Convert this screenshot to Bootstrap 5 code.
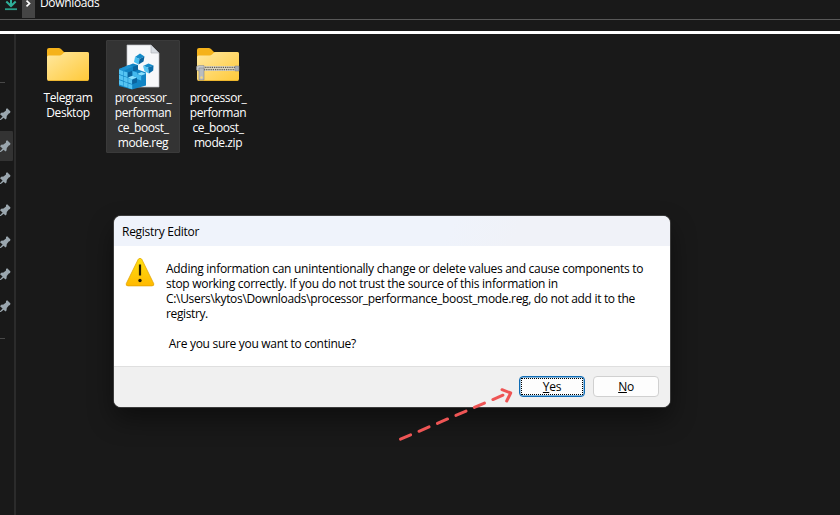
<!DOCTYPE html>
<html lang="en">
<head>
<meta charset="utf-8">
<meta name="viewport" content="width=device-width, initial-scale=1">
<title>Downloads</title>
<link href="https://cdn.jsdelivr.net/npm/bootstrap@5.3.0/dist/css/bootstrap.min.css" rel="stylesheet">
<style>
body{background:#191919;color:#fff;font:12px/15px "Open Sans","Noto Sans",sans-serif;height:515px}
.crumbs{height:20px;border-bottom:1px solid #585858;background:#191919}
.crumbs svg{flex:none}
.crumb-label{margin:-5px 0 0 5px;letter-spacing:-.34px}
.rule-white{height:3px;background:#fff;margin-top:11px}
.side{width:16px;border-right:2px solid #2b2b2b;padding-top:48px}
.side-line{height:1px;width:5px;background:#484848}
.pins{padding:15px 0 16px}
.pin{height:32px;width:13px;padding-top:1px}
.pin.active{background:linear-gradient(#333,#333) 0 1px/13px 30px no-repeat;border-radius:0 3px 3px 0}
.files{padding:6px 0 0 15px;gap:1px}
.tile{width:74px;height:113px;border:1px solid transparent;border-radius:1px;text-align:center;white-space:nowrap;letter-spacing:-.42px}
.tile.active{background:#333;border-color:#3a3a3a}
.tile svg{display:block;margin:-1px 0 0 -1px}
.dialog{position:absolute;left:114px;top:216px;width:556px;height:191px;border-radius:7px;background:#fff;color:#000;box-shadow:0 0 0 1px #3c3c3c,0 12px 26px rgba(0,0,0,.45)}
.dialog-title{height:30px;padding:0 8px;background:linear-gradient(115deg,#eff3fb 60%,#f0f2f8 72%);letter-spacing:-.27px}
.dialog-body{height:120px;padding:11px 12px 0 11px}
.msg{padding:4px 0 0 10px;white-space:pre}
.l1,.l2{letter-spacing:-.284px}
.l3{letter-spacing:-.32px}
.l4{letter-spacing:-.38px}
.l5{letter-spacing:-.3px}
.dialog-foot{height:41px;background:#f0f0f0;border-top:1px solid #dfdfdf;padding:9px 11px 0 0;gap:8px}
.key{width:66px;height:21px;padding:0;border:1px solid #d0d0d0;border-radius:4px;background:#fdfdfd;color:#000;font-size:12px;line-height:20px;letter-spacing:-.3px;position:relative}
.key.primary{border-color:#0f6cb5;box-shadow:inset 0 0 0 .4px #0f6cb5}
.key.primary::after{content:"";position:absolute;inset:1px;border:1px dotted #000}
.key u{text-underline-offset:1px;text-decoration-skip-ink:none}
.arrow{position:absolute;left:390px;top:380px}
</style>
</head>
<body class="overflow-hidden d-flex flex-column m-0">
<header class="crumbs d-flex flex-shrink-0">
  <svg width="22" height="19" viewBox="0 0 22 19"><path d="M11 -3V5.5M6.3 1.5L11 6L15.7 1.5" fill="none" stroke="#2fb09a" stroke-width="2"/><path d="M5 9.2H17" stroke="#2a9c88" stroke-width="1.8"/></svg>
  <svg width="13" height="19" viewBox="0 0 13 19"><path d="M0 -3H13V18H0Z" fill="#454545"/><path d="M4.5 .7L7.5 3.5L4.5 6.3" fill="none" stroke="#fff" stroke-width="1.7"/></svg>
  <div class="crumb-label">Downloads</div>
</header>
<div class="rule-white flex-shrink-0"></div>
<main class="d-flex flex-grow-1">
  <svg class="d-none"><symbol id="pin" viewBox="0 0 12 30"><path d="M0 20.2L2.6 17.6L0 15.2L1.2 13.8L3.5 13.4L6 11.4L6 10L7.2 9.2L10.5 12.6L10 14L8.8 14.6L6.8 17L6.5 19.4L5.4 20.4L3.7 18.8L.8 21L0 21Z" fill="#9aa6ae"/></symbol></svg>
  <aside class="side flex-shrink-0">
    <div class="side-line"></div>
    <div class="pins">
      <div class="pin"><svg class="d-block" width="12" height="30"><use href="#pin"/></svg></div>
      <div class="pin active"><svg class="d-block" width="12" height="30"><use href="#pin"/></svg></div>
      <div class="pin"><svg class="d-block" width="12" height="30"><use href="#pin"/></svg></div>
      <div class="pin"><svg class="d-block" width="12" height="30"><use href="#pin"/></svg></div>
      <div class="pin"><svg class="d-block" width="12" height="30"><use href="#pin"/></svg></div>
      <div class="pin"><svg class="d-block" width="12" height="30"><use href="#pin"/></svg></div>
      <div class="pin"><svg class="d-block" width="12" height="30"><use href="#pin"/></svg></div>
    </div>
    <div class="side-line"></div>
  </aside>
  <section class="files d-flex align-items-start">
    <div class="tile">
      <svg width="74" height="50" viewBox="0 0 74 50">
        <defs><linearGradient id="fold" x1="0" y1="0" x2="1" y2="1"><stop offset="0" stop-color="#ffe8a0"/><stop offset="1" stop-color="#ffc938"/></linearGradient></defs>
        <path id="tab" d="M16 10Q16 8 18 8H27.5Q29 8 30 9L33 12H56Q58 12 58 14V30H16Z" fill="#f5b21a"/>
        <path id="front" d="M16 17Q16 15.5 17.5 15.5H28.5Q30 15.5 31 14.5L32.5 13Q33.5 12 35 12H56Q58 12 58 14V39Q58 41 56 41H18Q16 41 16 39Z" fill="url(#fold)"/>
        <path d="M17 40.5H57" stroke="#e9b027" stroke-width=".8"/>
      </svg>
      Telegram<br>Desktop
    </div>
    <div class="tile active">
      <svg width="74" height="50" viewBox="0 0 74 50">
        <path d="M21 5H45L53 13V47H21Z" fill="#f7f8fa" stroke="#b9bcc0" stroke-width=".7"/>
        <path d="M45 5V13H53Z" fill="#d7dce2" stroke="#a9adb3" stroke-width=".6"/>
        <path d="M13 29L27 23.5L32 25V29.5L40 32.5V45.5L26 49.5L13 46Z" fill="#1184c4"/>
        <path d="M13 29L18 27L22.5 28.5L17.5 31ZM18 27L22.5 25L27 26.8L22.5 28.5Z" fill="#1f93d2"/>
        <path d="M13 29.6L17 31V35.5L13 34ZM17.5 31.2L21.7 32.5V37.2L17.5 35.7ZM13 34.8L17 36.2V40.6L13 39.3ZM17.5 36.4L21.7 37.8V42.4L17.5 41ZM22.2 38L26.2 39.5V44L22.2 42.6ZM13 40L17 41.4V45.8L13 44.6ZM17.5 41.8L21.7 43.1V47.6L17.5 46.3ZM22.2 43.4L26.2 44.8V49.2L22.2 48Z" fill="#55c4f3"/>
        <path d="M21.7 32.5L26.5 30.8V35.5L21.7 37.4ZM26.2 39.7L31 37.8V42.6L26.2 44.3ZM27 26.8L32 25V30L27 31.5Z" fill="#0a639e"/>
        <path d="M22 37.6L26.5 35.7L31 37.5L26 39.4ZM31 34L35.5 32L40 33.7L35.4 35.5Z" fill="#8be0fd"/>
        <path d="M26.5 31L31 32.6V37.4L26.5 35.7ZM31 34.3L35.2 35.8V40.4L31 39Z" fill="#43b9ee"/>
        <path d="M29 17L34 13.5L38.5 16.5L33.5 19Z" fill="#148bc9"/><path d="M29 17L33.5 19L32.5 24.5L28 22Z" fill="#4abff0"/><path d="M33.5 19L38.5 16.5L37.5 21.5L32.5 24.5Z" fill="#0a629c"/>
        <path d="M37 26L42.5 23.5L47.5 25.5L42 27.5Z" fill="#148bc9"/><path d="M37 26L42 27.5L43 33.5L38.5 31.2Z" fill="#55c5f3"/><path d="M42 27.5L47.5 25.5L47.2 30.5L43 33.5Z" fill="#0b6ca8"/>
      </svg>
      processor_<br>performan<br>ce_boost_<br>mode.reg
    </div>
    <div class="tile">
      <svg width="74" height="50" viewBox="0 0 74 50">
        <use href="#tab"/><use href="#front"/>
        <path d="M17 40.5H57" stroke="#e9b027" stroke-width=".8"/>
        <rect x="17" y="26" width="41" height="5" fill="#d9d2bd"/>
        <path d="M22 27.3H54M23 29.7H54" stroke="#5d5a50" stroke-width="1.3" stroke-dasharray="1.2 1"/>
        <path d="M54 26H58V31H54Z" fill="#a9adb2" stroke="#808387" stroke-width=".5"/>
        <path d="M15.5 26.5L18 25.5H23V31H18L15.5 30Z" fill="#c5c8cb" stroke="#808387" stroke-width=".5"/>
        <path d="M18 28H23V40H18Z" fill="#b9bcc0" stroke="#85888b" stroke-width=".6"/><circle cx="20.5" cy="37.5" r="1.2" fill="#f7d77d"/>
      </svg>
      processor_<br>performan<br>ce_boost_<br>mode.zip
    </div>
  </section>
</main>
<div class="dialog overflow-hidden" role="dialog" aria-label="Registry Editor">
  <div class="dialog-title d-flex align-items-center">Registry Editor</div>
  <div class="dialog-body d-flex">
    <svg class="flex-shrink-0" width="31" height="32" viewBox="0 0 31 32">
      <defs><linearGradient id="warn" x1="0" y1="0" x2="0" y2="1"><stop offset="0" stop-color="#ffe011"/><stop offset="1" stop-color="#ffb900"/></linearGradient></defs>
      <path d="M13.2 2.3Q15 .1 16.8 2.3L28.7 26.5Q29.5 28.8 27 28.9H3Q.5 28.8 1.3 26.5Z" fill="url(#warn)" stroke="#dfa000" stroke-width=".7"/>
      <path d="M15 7.5V18.5" stroke="#241c00" stroke-width="2.2"/><circle cx="15" cy="23.5" r="1.7" fill="#241c00"/>
    </svg>
    <div class="msg"><span class="l1">Adding information can unintentionally change or delete values and cause components to</span><br><span class="l2">stop working correctly. If you do not trust the source of this information in</span><br><span class="l3">C:\Users\kytos\Downloads\processor_performance_boost_mode.reg, do not add it to the</span><br><span class="l4">registry.</span><br><br><span class="l5"> Are you sure you want to continue?</span></div>
  </div>
  <div class="dialog-foot d-flex justify-content-end">
    <button class="btn key primary" type="button"><u>Y</u>es</button>
    <button class="btn key" type="button"><u>N</u>o</button>
  </div>
</div>
<svg class="arrow" width="130" height="70" viewBox="390 380 130 70" fill="none" stroke="#ee5555" stroke-width="3" stroke-linecap="round" stroke-linejoin="round">
  <path d="M400.5 439.2L505 394.3" stroke-dasharray="11 9.1"/>
  <path d="M502 389.7L510.7 393L506.7 401"/>
</svg>
<script src="https://cdn.jsdelivr.net/npm/bootstrap@5.3.0/dist/js/bootstrap.bundle.min.js"></script>
</body>
</html>
